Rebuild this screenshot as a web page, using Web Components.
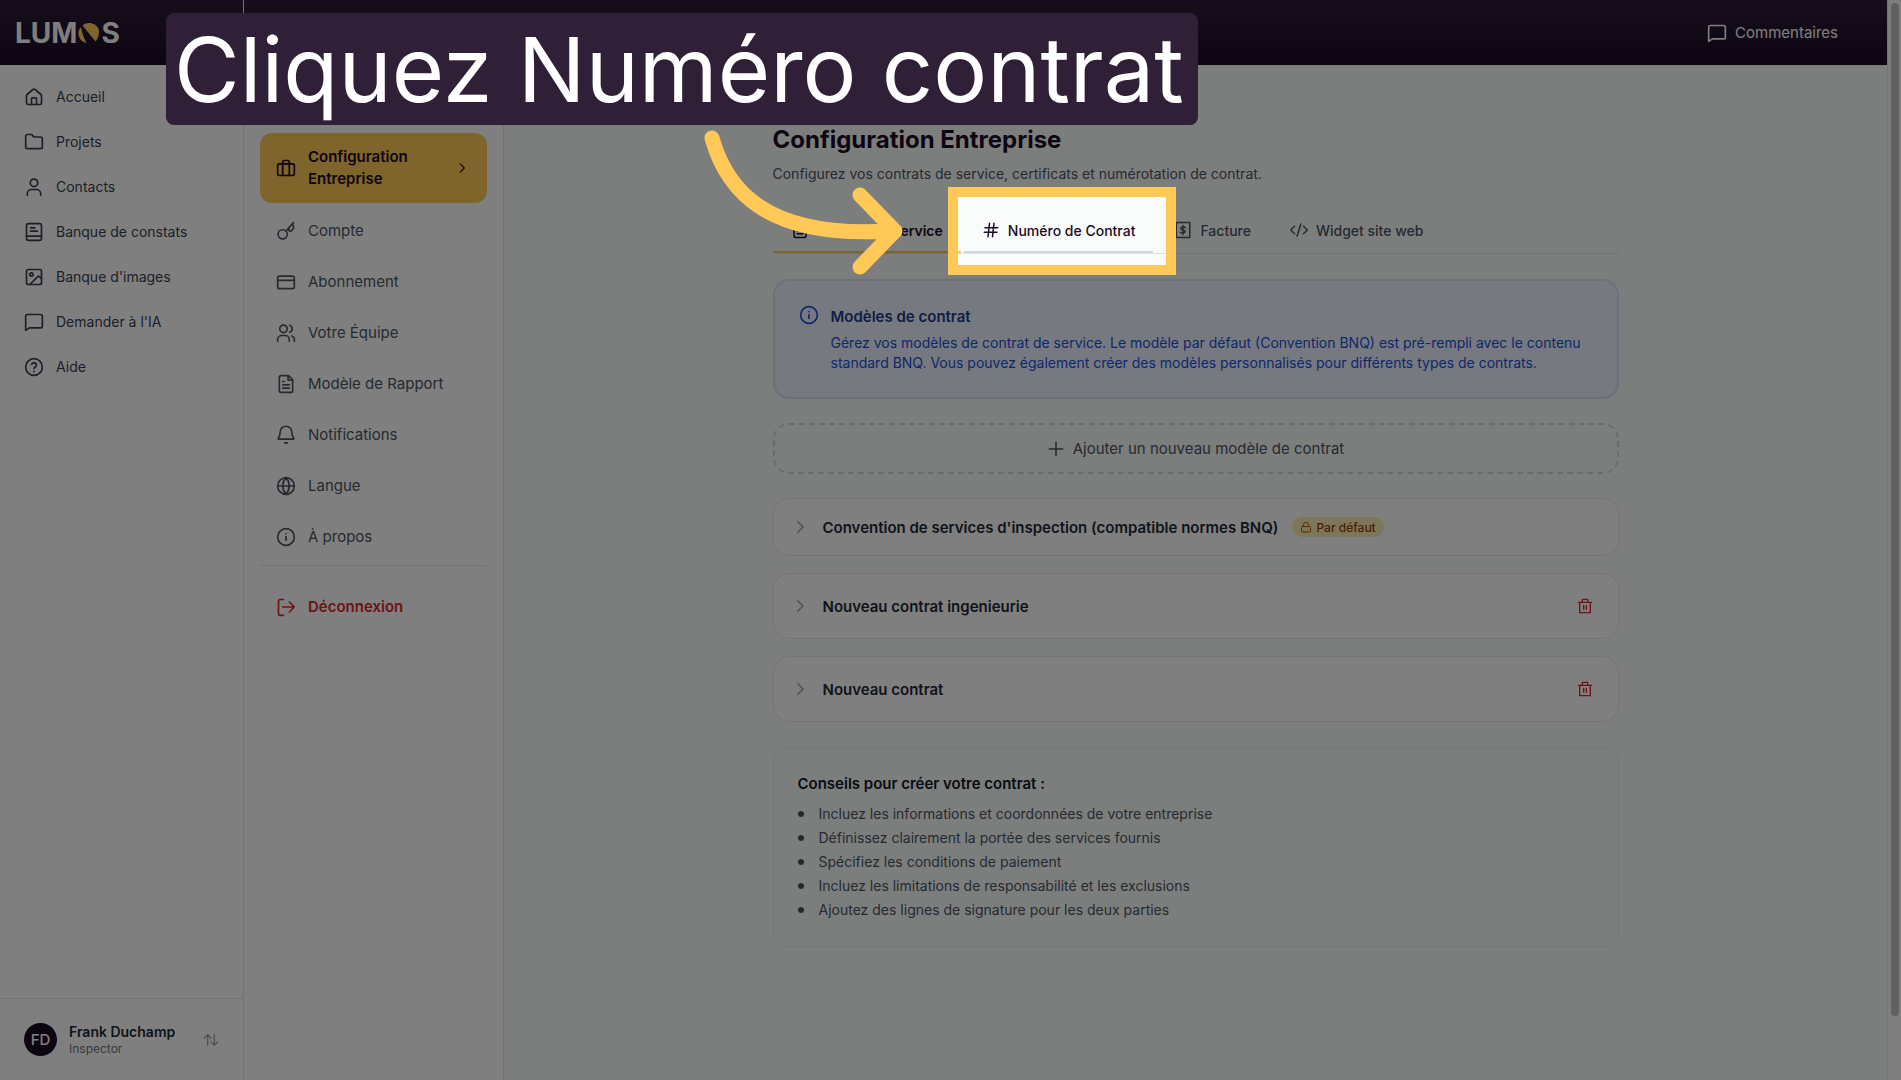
<!DOCTYPE html>
<html lang="fr">
<head>
<meta charset="utf-8">
<title>Lumos - Configuration Entreprise</title>
<style>
    html, body{
        margin: 0;
        height: 100%;
    }
    body{
        font-family: Inter, "Open Sans", sans-serif;
        font-size: 14px;
        color: #1f2937;
        background: #fff;
        overflow: hidden;
    }
</style>
</head>
<body>
<lumos-app></lumos-app>

<script>
const icons = {
    home: '<path d="M3 10.5a2 2 0 0 1 .7-1.5l7-6a2 2 0 0 1 2.6 0l7 6a2 2 0 0 1 .7 1.5V19a2 2 0 0 1-2 2H5a2 2 0 0 1-2-2z"/><path d="M9 21v-7a1 1 0 0 1 1-1h4a1 1 0 0 1 1 1v7"/>',
    folder: '<path d="M22 18a2 2 0 0 1-2 2H4a2 2 0 0 1-2-2V5a2 2 0 0 1 2-2h4.500a2 2 0 0 1 1.700.9L11 5.100A2 2 0 0 0 12.700 6H20a2 2 0 0 1 2 2z"/>',
    user: '<circle cx="12" cy="7" r="4.500"/><path d="M4 22v-2a5 5 0 0 1 5-5h6a5 5 0 0 1 5 5v2"/>',
    book: '<rect x="3" y="2" width="18" height="20" rx="2.500"/><path d="M3 17h18M8 7h5M8 11h8"/>',
    image: '<rect x="3" y="3" width="18" height="18" rx="2"/><circle cx="9" cy="9" r="2"/><path d="m7 21 9.500-9.500a1.500 1.500 0 0 1 2 0L21 14"/>',
    message: '<path d="M22 17a2 2 0 0 1-2 2H6.500L2 22V5a2 2 0 0 1 2-2h16a2 2 0 0 1 2 2z"/>',
    help: '<circle cx="12" cy="12" r="10"/><path d="M9.100 9a3 3 0 0 1 5.800 1c0 2-3 2.500-3 4"/><path d="M12 17.500v.1"/>',
    briefcase: '<rect x="2" y="7" width="20" height="14" rx="2"/><path d="M8 21V5a2 2 0 0 1 2-2h4a2 2 0 0 1 2 2v16"/>',
    key: '<circle cx="8" cy="16" r="5.500"/><path d="M12 12 21 2M15.500 8v3.500l2 1 3.500-3.500V5.500l-2-1"/>',
    card: '<rect x="2" y="5" width="20" height="15" rx="2"/><path d="M2 10h20"/>',
    users: '<circle cx="9" cy="7" r="4.500"/><path d="M2 22v-2a5 5 0 0 1 5-5h4a5 5 0 0 1 5 5v2"/><path d="M16.500 2.800a4.500 4.500 0 0 1 0 8.400M19 15.500a4.500 4.500 0 0 1 3 4.300V22"/>',
    file: '<path d="M15 2H6a2 2 0 0 0-2 2v16a2 2 0 0 0 2 2h12a2 2 0 0 0 2-2V7z"/><path d="M14.500 2v5.500H20M8 9h2M8 13h8M8 17h8"/>',
    bell: '<path d="M3.300 17H20.700c.8 0 1-.9.500-1.500C19.500 13.500 19 12 19 8.500a7 7 0 0 0-14 0c0 3.500-.500 5-2.200 7-.5.600-.3 1.500.5 1.500z"/><path d="M10.500 21.500h3"/>',
    globe: '<circle cx="12" cy="12" r="10"/><path d="M2 12h20M12 2a15 15 0 0 0 0 20 15 15 0 0 0 0-20"/>',
    info: '<circle cx="12" cy="12" r="10"/><path d="M12 11.500V16M12 8v.1"/>',
    logout: '<path d="M9 22H5a2 2 0 0 1-2-2V5a2 2 0 0 1 2-2h4M8 12h14M16 6l6 6-6 6"/>',
    next: '<path d="m9 5 7 7-7 7"/>',
    swap: '<path d="M7 20V4M2 9l5-5 5 5M17 4v16M12 15l5 5 5-5"/>',
    hash: '<path d="M4 9h17M3 15h17M10 3 8 21M16 3l-2 18"/>',
    bill: '<rect x="3" y="2" width="18" height="20"/><path d="M12 6v12M15.500 9C14 7.500 9 7.500 9 10s6 1.500 6 4-5 2.500-6.500 1"/>',
    code: '<path d="m18 17 5-5-5-5M6 7l-5 5 5 5M14.500 4l-5 16"/>',
    plus: '<path d="M12 3v18M3 12h18"/>',
    lock: '<rect x="3" y="11" width="18" height="11" rx="2"/><path d="M7 11V7.500a5 5 0 0 1 10 0V11"/>',
    trash: '<path d="M2 6.500h20M4 6.500V22h16V6.500M8 6V2h8v4M10 11v6M14 11v6"/>'
}

class LumosIcon extends HTMLElement{
    connectedCallback(){
        const size = this.getAttribute("size") ?? 20
        const root = this.shadowRoot ?? this.attachShadow({mode:"open"})
        root.innerHTML = `
            <style>
                :host{ display: inline-flex; flex: none; }
                svg{
                    fill: none;
                    stroke: currentColor;
                    stroke-width: 2;
                    stroke-linecap: round;
                    stroke-linejoin: round;
                }
            </style>
            <svg width="${size}" height="${size}" viewBox="0 0 24 24" aria-hidden="true">${icons[this.getAttribute("name")]}</svg>
        `
    }
}

// Builds an element class from its markup
function component(name, html){
    const template = document.createElement("template")
    template.innerHTML = html
    customElements.define(name, class extends HTMLElement{
        constructor(){
            super()
            this.attachShadow({mode:"open"}).append(template.content.cloneNode(true))
        }
    })
}

class NavLink extends HTMLElement{
    constructor(){
        super()
        this.attachShadow({mode:"open"})
    }
    connectedCallback(){
        this.shadowRoot.innerHTML = `
            <style>
                :host{ display: block; }
                a{
                    display: flex;
                    align-items: center;
                    gap: 12px;
                    min-height: 41px;
                    padding: 0 24px;
                    font-size: 14px;
                    color: #374151;
                    text-decoration: none;
                }
            </style>
            <a href="#"><lumos-icon name="${this.getAttribute("icon")}"></lumos-icon><slot></slot></a>
        `
    }
}

class SettingsLink extends HTMLElement{
    constructor(){
        super()
        this.attachShadow({mode:"open"})
    }
    connectedCallback(){
        const active = this.hasAttribute("active")
        this.shadowRoot.innerHTML = `
            <style>
                :host{ display: block; }
                a{
                    display: flex;
                    align-items: center;
                    gap: 12px;
                    min-height: 47px;
                    box-sizing: border-box;
                    padding: 0 16px;
                    border-radius: 12px;
                    font-size: 15px;
                    line-height: 22px;
                    color: #4b5563;
                    text-decoration: none;
                }
                .label{ flex: 1; }
                :host([active]) a{
                    min-height: 70px;
                    padding-right: 18px;
                    background: #ffc857;
                    color: #1c0a26;
                    font-weight: 600;
                }
                :host([danger]) a{
                    color: #dc2626;
                    font-weight: 600;
                }
            </style>
            <a href="#">
                <lumos-icon name="${this.getAttribute("icon")}"></lumos-icon>
                <span class="label"><slot></slot></span>
                ${active ? '<lumos-icon name="next" size="14"></lumos-icon>' : ''}
            </a>
        `
    }
}

class TabButton extends HTMLElement{
    constructor(){
        super()
        this.attachShadow({mode:"open"})
    }
    connectedCallback(){
        this.shadowRoot.innerHTML = `
            <style>
                :host{ display: block; }
                button{
                    display: flex;
                    align-items: center;
                    gap: 8px;
                    height: 48px;
                    padding: 4px 18px 0;
                    border: 0;
                    border-bottom: 2px solid transparent;
                    background: none;
                    font: inherit;
                    font-size: 14px;
                    font-weight: 500;
                    color: #4b5563;
                    white-space: nowrap;
                }
                :host([active]) button{
                    border-color: #ffc857;
                    color: #1c0a26;
                    font-weight: 600;
                }
                :host([hover]) button{ border-color: #d1d5db; color: #1c0a26; }
            </style>
            <button type="button" role="tab" aria-selected="${this.hasAttribute("active")}">
                <lumos-icon name="${this.getAttribute("icon")}" size="18"></lumos-icon><slot></slot>
            </button>
        `
    }
}

component("lumos-logo", `
    <style>
        :host{
            display: flex;
            align-items: center;
            gap: 1px;
            color: #fff;
            font-size: 28px;
            font-weight: 700;
            line-height: 32px;
        }
    </style>
    <span>LUM</span>
    <svg width="22" height="20" viewBox="0 0 22 20" aria-hidden="true">
        <path fill="#ffc857" d="M4.500 2.500C10-2 18 0 20.500 6 22 11 20 15 17.500 18.500z"/>
        <path fill="#ffc857" d="M3 4C4 10 6 15 8.500 20 3 19 0 14 .5 9.500 .8 7 1.500 5.500 3 4z"/>
    </svg>
    <span>S</span>
`)

component("side-bar", `
    <style>
        :host{
            display: flex;
            flex-direction: column;
            width: 243px;
            flex: none;
            background: #fff;
            border-right: 1px solid #e5e7eb;
        }
        .brand{
            display: flex;
            align-items: center;
            height: 65px;
            padding: 0 15px;
            background: linear-gradient(#2f1c38, #1c0a26);
        }
        nav{
            display: flex;
            flex-direction: column;
            gap: 4px;
            flex: 1;
            padding-top: 11px;
        }
        button{
            display: flex;
            align-items: center;
            gap: 12px;
            padding: 24px;
            border: 0;
            border-top: 1px solid #e5e7eb;
            background: none;
            font: inherit;
            text-align: left;
        }
        .avatar{
            display: grid;
            place-items: center;
            width: 33px;
            height: 33px;
            border-radius: 50%;
            background: #1c0a26;
            color: #fff;
            font-size: 15px;
            font-weight: 500;
        }
        .who{ flex: 1; }
        .name{
            display: block;
            color: #1f2937;
            font-size: 14px;
            font-weight: 600;
            line-height: 18px;
        }
        .role{
            display: block;
            color: #6b7280;
            font-size: 12px;
            line-height: 15px;
        }
        button lumos-icon{ color: #9ca3af; }
    </style>
    <div class="brand"><lumos-logo></lumos-logo></div>
    <nav>
        <nav-link icon="home">Accueil</nav-link>
        <nav-link icon="folder">Projets</nav-link>
        <nav-link icon="user">Contacts</nav-link>
        <nav-link icon="book">Banque de constats</nav-link>
        <nav-link icon="image">Banque d'images</nav-link>
        <nav-link icon="message">Demander à l'IA</nav-link>
        <nav-link icon="help">Aide</nav-link>
    </nav>
    <button type="button">
        <span class="avatar">FD</span>
        <span class="who"><span class="name">Frank Duchamp</span><span class="role">Inspector</span></span>
        <lumos-icon name="swap" size="16"></lumos-icon>
    </button>
`)

component("top-bar", `
    <style>
        :host{
            display: flex;
            justify-content: flex-end;
            align-items: center;
            height: 65px;
            flex: none;
            padding: 0 49px;
            background: linear-gradient(#2f1c38, #1c0a26);
        }
        button{
            display: flex;
            align-items: center;
            gap: 8px;
            padding: 0;
            border: 0;
            background: none;
            color: #fff;
            font: inherit;
            font-size: 15px;
        }
    </style>
    <button type="button"><lumos-icon name="message"></lumos-icon>Commentaires</button>
`)

component("settings-menu", `
    <style>
        :host{
            display: block;
            width: 260px;
            box-sizing: border-box;
            flex: none;
            padding: 68px 16px 0;
            border-right: 1px solid #e5e7eb;
            background: #fff;
        }
        nav{
            display: flex;
            flex-direction: column;
            gap: 4px;
        }
        hr{
            width: 100%;
            margin: 1px 0 13px;
            border: 0;
            border-top: 1px solid #e5e7eb;
        }
    </style>
    <nav>
        <settings-link icon="briefcase" active>Configuration Entreprise</settings-link>
        <settings-link icon="key">Compte</settings-link>
        <settings-link icon="card">Abonnement</settings-link>
        <settings-link icon="users">Votre Équipe</settings-link>
        <settings-link icon="file">Modèle de Rapport</settings-link>
        <settings-link icon="bell">Notifications</settings-link>
        <settings-link icon="globe">Langue</settings-link>
        <settings-link icon="info">À propos</settings-link>
        <hr>
        <settings-link icon="logout" danger>Déconnexion</settings-link>
    </nav>
`)

component("info-note", `
    <style>
        :host{
            display: flex;
            gap: 12px;
            padding: 24px;
            border: 2px solid #d3e2f6;
            border-radius: 16px;
            background: #edf3fe;
            color: #1d4ed8;
        }
        h2{
            margin: 0 0 4px;
            color: #1e3a8a;
            font-size: 15px;
            font-weight: 600;
            line-height: 24px;
        }
        p{
            margin: 0;
            font-size: 14px;
            line-height: 20px;
        }
    </style>
    <lumos-icon name="info"></lumos-icon>
    <div>
        <h2><slot name="title"></slot></h2>
        <p><slot></slot></p>
    </div>
`)

class ContractCard extends HTMLElement{
    constructor(){
        super()
        this.attachShadow({mode:"open"})
    }
    connectedCallback(){
        const locked = this.hasAttribute("locked")
        this.shadowRoot.innerHTML = `
            <style>
                :host{
                    display: flex;
                    align-items: center;
                    justify-content: space-between;
                    min-height: 64px;
                    padding: 0 25px 0 17px;
                    border: 1px solid #e5e7eb;
                    border-radius: 16px;
                    background: #fff;
                }
                :host([locked]){ min-height: 56px; }
                button{
                    display: flex;
                    align-items: center;
                    padding: 0;
                    border: 0;
                    background: none;
                    font: inherit;
                    color: #1f2937;
                }
                .open{
                    gap: 14px;
                    font-size: 15px;
                    font-weight: 600;
                }
                .open lumos-icon{ color: #9ca3af; }
                .delete{ color: #dc2626; }
                .badge{
                    display: inline-flex;
                    align-items: center;
                    gap: 4px;
                    height: 20px;
                    padding: 0 8px;
                    border-radius: 10px;
                    background: #fdecb0;
                    color: #92400e;
                    font-size: 12px;
                    font-weight: 500;
                }
                .badge lumos-icon{ color: #b45309; }
            </style>
            <button type="button" class="open" aria-expanded="false">
                <lumos-icon name="next" size="18"></lumos-icon>
                <slot></slot>
                ${locked ? '<span class="badge"><lumos-icon name="lock" size="12"></lumos-icon>Par défaut</span>' : ''}
            </button>
            ${locked ? '' : '<button type="button" class="delete" aria-label="Supprimer"><lumos-icon name="trash" size="16"></lumos-icon></button>'}
        `
    }
}

component("tips-card", `
    <style>
        :host{
            display: block;
            padding: 24px;
            border: 1px solid #e9ebec;
            border-radius: 16px;
        }
        h2{
            margin: 0 0 6px;
            color: #111827;
            font-size: 15px;
            font-weight: 600;
            line-height: 24px;
        }
        ul{
            margin: 0;
            padding: 0;
            list-style: none;
            color: #4b5563;
            font-size: 14px;
            line-height: 24px;
        }
        li{
            display: flex;
            align-items: center;
            gap: 15px;
        }
        li::before{
            content: "";
            width: 6px;
            height: 6px;
            border-radius: 50%;
            background: currentColor;
        }
    </style>
    <h2>Conseils pour créer votre contrat :</h2>
    <ul>
        <li>Incluez les informations et coordonnées de votre entreprise</li>
        <li>Définissez clairement la portée des services fournis</li>
        <li>Spécifiez les conditions de paiement</li>
        <li>Incluez les limitations de responsabilité et les exclusions</li>
        <li>Ajoutez des lignes de signature pour les deux parties</li>
    </ul>
`)

component("contract-settings", `
    <style>
        :host{
            display: block;
            flex: 1;
            padding: 59px 24px 0;
            background: #f9fcfb;
        }
        main{
            max-width: 846px;
            margin: 0 auto;
        }
        h1{
            margin: 0;
            color: #1c0a26;
            font-size: 24px;
            font-weight: 700;
            line-height: 32px;
        }
        .intro{
            margin: 7px 0 0;
            color: #4b5563;
            font-size: 14px;
            line-height: 22px;
        }
        .tabs{
            display: flex;
            gap: 3px;
            margin-top: 20px;
            border-bottom: 1px solid #dfe2e6;
        }
        info-note{ margin-top: 25px; }
        .add{
            display: flex;
            align-items: center;
            justify-content: center;
            gap: 8px;
            width: 100%;
            height: 51px;
            margin: 24px 0;
            border: 2px dashed #d1d5db;
            border-radius: 16px;
            background: none;
            color: #4b5563;
            font: inherit;
            font-size: 15px;
        }
        .list{
            display: flex;
            flex-direction: column;
            gap: 17px;
            margin-bottom: 25px;
        }
    </style>
    <main>
        <h1>Configuration Entreprise</h1>
        <p class="intro">Configurez vos contrats de service, certificats et numérotation de contrat.</p>
        <div class="tabs" role="tablist">
            <tab-button icon="file" active>Contrat de Service</tab-button>
            <tab-button icon="hash" hover>Numéro de Contrat</tab-button>
            <tab-button icon="bill">Facture</tab-button>
            <tab-button icon="code">Widget site web</tab-button>
        </div>
        <info-note>
            <span slot="title">Modèles de contrat</span>
            Gérez vos modèles de contrat de service. Le modèle par défaut (Convention BNQ) est pré-rempli avec le contenu standard BNQ. Vous pouvez également créer des modèles personnalisés pour différents types de contrats.
        </info-note>
        <button type="button" class="add"><lumos-icon name="plus" size="18"></lumos-icon>Ajouter un nouveau modèle de contrat</button>
        <div class="list">
            <contract-card locked>Convention de services d'inspection (compatible normes BNQ)</contract-card>
            <contract-card>Nouveau contrat ingenieurie</contract-card>
            <contract-card>Nouveau contrat</contract-card>
        </div>
        <tips-card></tips-card>
    </main>
`)

component("scroll-track", `
    <style>
        :host{
            display: block;
            width: 8px;
            flex: none;
            padding: 3px 2px 64px 3px;
            border-left: 1px solid #e8e8e8;
            background: #fcfcfc;
        }
        div{
            height: 100%;
            border-radius: 4px;
            background: #c1c1c1;
        }
    </style>
    <div></div>
`)

// Guided tour step: dims the page, frames one control and points at it
component("tour-step", `
    <style>
        :host{
            position: absolute;
            inset: 0;
            overflow: hidden;
            pointer-events: none;
        }
        .spot{
            position: absolute;
            left: 948px;
            top: 187px;
            width: 208px;
            height: 68px;
            border: 10px solid #ffc857;
            box-shadow: 0 0 0 2000px rgba(0, 0, 0, .5);
        }
        .caption{
            position: absolute;
            left: 166px;
            top: 13px;
            height: 112px;
            width: 1032px;
            box-sizing: border-box;
            padding: 0 8px;
            border-radius: 8px;
            background: #2f2037;
            color: #fff;
            font-size: 90px;
            line-height: 114px;
            white-space: nowrap;
        }
        svg{
            position: absolute;
            left: 700px;
            top: 120px;
        }
    </style>
    <div class="spot"></div>
    <div class="caption"><slot></slot></div>
    <svg width="210" height="160" viewBox="700 120 210 160" fill="none" stroke="#ffc857" stroke-width="15" stroke-linecap="round" stroke-linejoin="round" aria-hidden="true">
        <path d="M712 138C726 188 764 239 890 231"/>
        <path d="M860 195 895 231 860 267"/>
    </svg>
`)

component("lumos-app", `
    <style>
        :host{
            display: flex;
            position: relative;
            min-height: 100vh;
        }
        .page{
            display: flex;
            flex: 1;
            flex-direction: column;
        }
        .body{
            display: flex;
            flex: 1;
        }
    </style>
    <side-bar></side-bar>
    <div class="page">
        <top-bar></top-bar>
        <div class="body">
            <settings-menu></settings-menu>
            <contract-settings></contract-settings>
        </div>
    </div>
    <scroll-track></scroll-track>
    <tour-step>Cliquez Numéro contrat</tour-step>
`)

customElements.define("lumos-icon", LumosIcon)
customElements.define("nav-link", NavLink)
customElements.define("settings-link", SettingsLink)
customElements.define("tab-button", TabButton)
customElements.define("contract-card", ContractCard)
</script>
</body>
</html>
